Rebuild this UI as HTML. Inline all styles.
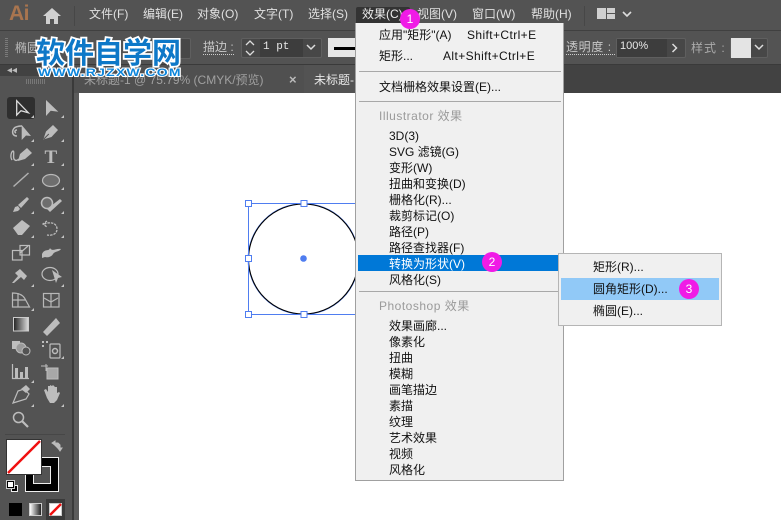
<!DOCTYPE html>
<html><head><meta charset="utf-8">
<style>
html,body{margin:0;padding:0;background:#fff}
#r{position:relative;width:781px;height:520px;overflow:hidden;background:#fff;font-family:"Liberation Sans","Noto Sans CJK SC",sans-serif;font-size:12px}
#r div{position:absolute;box-sizing:border-box}
.t{white-space:nowrap;line-height:16px;height:16px}
.m{color:#e0e0e0;top:6px}
.i{color:#111;left:33px}
.g{color:#9a9a9a}
.n{width:20px;height:20px;border-radius:50%;background:#f01be6;color:#fff;text-align:center;line-height:20px;font-size:12px}
.b{background:#474747;border:1px solid #5f5f5f;border-radius:2px}
.c{color:#c8c8c8}
</style></head><body>
<div id="r">
<div style="left:0;top:0;width:781px;height:31px;background:#535353"></div>
<div style="left:0;top:30px;width:781px;height:1px;background:#404040"></div>
<div style="left:0;top:31px;width:781px;height:34px;background:#535353"></div>
<div style="left:0;top:64px;width:781px;height:1px;background:#3a3a3a"></div>
<div style="left:73px;top:65px;width:708px;height:28px;background:#424242"></div>
<div style="left:0;top:65px;width:72px;height:455px;background:#535353"></div>
<div style="left:0;top:65px;width:72px;height:11px;background:#424242"></div>
<div style="left:72px;top:65px;width:2px;height:455px;background:#3a3a3a"></div>
<div style="left:74px;top:93px;width:5px;height:427px;background:#5c5c5c"></div>
<div style="left:74px;top:65px;width:230px;height:28px;background:#505050"></div>
<div style="left:304px;top:65px;width:52px;height:28px;background:#535353"></div>

<div class="t" style="left:9px;top:1px;font-size:21px;line-height:26px;height:26px;font-weight:bold;color:#a9754f;letter-spacing:-.5px">Ai</div>
<svg style="position:absolute;left:43px;top:8px" width="18" height="16" viewBox="0 0 18 16"><path d="M9 0L0 8h3v8h4v-5h4v5h4V8h3z" fill="#d0d0d0"/></svg>
<div style="left:74px;top:6px;width:1px;height:20px;background:#474747"></div>
<div class="t m" style="left:89px">文件(F)</div>
<div class="t m" style="left:143px">编辑(E)</div>
<div class="t m" style="left:197px">对象(O)</div>
<div class="t m" style="left:254px">文字(T)</div>
<div class="t m" style="left:308px">选择(S)</div>
<div style="left:356px;top:7px;width:54px;height:16px;background:#333;border-radius:2px 2px 0 0"></div>
<div class="t m" style="left:362px;color:#eee">效果(C)</div>
<div class="t m" style="left:417px">视图(V)</div>
<div class="t m" style="left:472px">窗口(W)</div>
<div class="t m" style="left:531px">帮助(H)</div>
<div style="left:584px;top:6px;width:1px;height:20px;background:#474747"></div>
<div style="left:597px;top:8px;width:9px;height:11px;background:#d0d0d0"></div>
<div style="left:607px;top:8px;width:8px;height:5px;background:#d0d0d0"></div>
<div style="left:607px;top:14px;width:8px;height:5px;background:#d0d0d0"></div>
<svg style="position:absolute;left:621px;top:10px" width="12" height="8"><path d="M2 2l4 4 4-4" fill="none" stroke="#ddd" stroke-width="1.6"/></svg>

<div style="left:5px;top:38px;width:3px;height:20px;background:repeating-linear-gradient(#7a7a7a 0 1px,#535353 1px 2px)"></div>
<div class="t c" style="left:15px;top:40px;color:#bbb">椭圆</div>
<div class="b" style="left:150px;top:38px;width:41px;height:21px"></div>
<div class="t c" style="left:203px;top:40px;border-bottom:1px dotted #ccc;height:15px;line-height:14px">描边 :</div>
<div class="b" style="left:241px;top:38px;width:81px;height:20px"></div>
<div style="left:260px;top:39px;width:43px;height:18px;background:#3d3d3d"></div>
<svg style="position:absolute;left:243px;top:38px" width="14" height="20"><path d="M3 7l4-4 4 4M3 13l4 4 4-4" fill="none" stroke="#ddd" stroke-width="1.3"/></svg>
<div class="t" style="left:263px;top:39px;color:#e8e8e8;font-size:11px;font-family:'Liberation Mono',monospace">1 pt</div>
<svg style="position:absolute;left:305px;top:43px" width="12" height="8"><path d="M2 2l4 4 4-4" fill="none" stroke="#ddd" stroke-width="1.5"/></svg>
<div style="left:328px;top:38px;width:28px;height:19px;background:#e6e6e6"></div>
<div style="left:334px;top:47px;width:22px;height:3px;background:#000"></div>

<div class="t c" style="left:566px;top:40px;border-bottom:1px dotted #ccc;height:15px;line-height:14px;width:55px;overflow:hidden;letter-spacing:.6px">透明度 :</div>
<div class="b" style="left:616px;top:38px;width:70px;height:20px"></div>
<div style="left:617px;top:39px;width:50px;height:18px;background:#3d3d3d"></div>
<div class="t" style="left:620px;top:38px;color:#e8e8e8;font-size:11px">100%</div>
<svg style="position:absolute;left:670px;top:42px" width="10" height="12"><path d="M2.500 2l4 4-4 4" fill="none" stroke="#ddd" stroke-width="1.500"/></svg>
<div class="t" style="left:691px;top:40px;color:#aaa;letter-spacing:1px">样式 :</div>
<div class="b" style="left:730px;top:38px;width:38px;height:20px"></div>
<div style="left:731px;top:38px;width:20px;height:20px;background:#e4e4e4"></div>
<svg style="position:absolute;left:753px;top:43px" width="12" height="8"><path d="M2 2l4 4 4-4" fill="none" stroke="#ddd" stroke-width="1.500"/></svg>

<div class="t" style="left:84px;top:72px;color:#a0a0a0;font-size:12px">未标题-1 @ 75.79% (CMYK/预览)</div>
<div class="t" style="left:289px;top:72px;color:#bbb;font-size:13px;font-weight:bold">×</div>
<div class="t" style="left:314px;top:72px;color:#e8e8e8">未标题-</div>
<div class="t" style="left:7px;top:63px;color:#bbb;font-size:10px">◂◂</div>
<div style="left:26px;top:79px;width:19px;height:5px;background:repeating-linear-gradient(90deg,#777 0 1px,#535353 1px 2px)"></div>

<svg style="position:absolute;left:0;top:90px" width="73" height="345" viewBox="0 90 73 345">
<rect x="7" y="97" width="28" height="22" rx="3" fill="#2f2f2f"/>
<path d="M16.700 100.700V115l4.300-4.300 7.300 2z" fill="none" stroke="#dcdcdc" stroke-width="1.300"/>
<path d="M46 100v16l4.700-5.300 7.600 1z" fill="#bdbdbd"/>
<path d="M17 136c-4 0-5-3-4-6 1-3 5-4 9-4M17 130c-2 0-3 2-1 3" fill="none" stroke="#bdbdbd" stroke-width="1.500"/>
<path d="M21.700 125l9.300 11-5-.5-4.300 4.500z" fill="#bdbdbd"/>
<path d="M43.300 139.500l2.700-8 7-6.500 5 5-6.500 7z" fill="#bdbdbd"/><path d="M43.800 139l5-5" stroke="#535353"/>
<path d="M12 160c-2-3-1-8 1-9 2 0-1 8 2 9 1 1 3 0 4-1" fill="none" stroke="#bdbdbd" stroke-width="1.300"/>
<path d="M18 161l2-7 7-6 5 5-7 6z" fill="#bdbdbd"/>
<text x="44.500" y="163" font-family="Liberation Serif,serif" font-size="19" font-weight="bold" fill="#bdbdbd">T</text>
<path d="M13.500 186.500l15-13.500" stroke="#b0b0b0" stroke-width="1.500"/>
<ellipse cx="51" cy="180.500" rx="8.500" ry="6" fill="#6e6e6e" stroke="#b8b8b8" stroke-width="1.200"/>
<path d="M13 212l2-5 3-1 2 3-2 2zM18 205l9-8 2 2-8 9z" fill="#bdbdbd"/>
<circle cx="47" cy="203" r="5.500" fill="#6e6e6e" stroke="#bdbdbd" stroke-width="1.500"/>
<path d="M47 209l13-10 2 2-12 11z" fill="#bdbdbd"/>
<path d="M13 228l9-8 8 6-8 9h-4z" fill="#bdbdbd"/>
<path d="M47 221l-4 3 4 3M44 224c8-3 13 0 13 5 0 5-5 7-10 6" fill="none" stroke="#bdbdbd" stroke-width="1.300" stroke-dasharray="2.500 1"/>
<g fill="none" stroke="#bdbdbd" stroke-width="1.200"><rect x="12.500" y="250.500" width="9.500" height="9.500"/><rect x="20" y="245.500" width="9.500" height="9.500"/><path d="M20 253l8-7"/></g>
<path d="M42 254c3-6 7-2 8-6 2 4 6 0 11 1-2 3-6 2-8 5-1 2-4 4-8 3l-3 1z" fill="#bdbdbd"/>
<path d="M12 283l6-7-3-3 5-4 7 7-3 4-3-3-7 6z" fill="#bdbdbd"/>
<ellipse cx="50" cy="274" rx="8" ry="6.500" fill="none" stroke="#bdbdbd" stroke-width="1.200"/>
<path d="M52 270l10 7-4 1-2 5z" fill="#bdbdbd"/>
<g fill="none" stroke="#b8b8b8" stroke-width="1.200"><path d="M12.500 307v-14c7 0 10 2 12 5l5 9zM18 293v14M12.500 300h13"/><rect x="43.500" y="293.500" width="15.500" height="13.500"/><path d="M51 293.500v13.500M44 298l7 4 7-4"/></g>
<defs><linearGradient id="gr"><stop offset="0" stop-color="#222"/><stop offset="1" stop-color="#ddd"/></linearGradient></defs>
<rect x="13.500" y="317.500" width="15" height="13.500" fill="url(#gr)" stroke="#ccc"/>
<path d="M43 332l13-14 4 5-13 13z" fill="#bdbdbd"/>
<rect x="12" y="341" width="8" height="8" fill="#bdbdbd"/>
<circle cx="21" cy="348" r="5" fill="#999" stroke="#bdbdbd"/><circle cx="26" cy="351" r="4" fill="#535353" stroke="#bdbdbd"/>
<rect x="50" y="344" width="10" height="14" rx="1" fill="none" stroke="#bdbdbd" stroke-width="1.200"/><circle cx="55" cy="351" r="2.500" fill="none" stroke="#bdbdbd" stroke-width="1.500"/>
<path d="M42 341h2v2h-2zM46 341h2v2h-2zM42 345h2v2h-2z" fill="#bdbdbd"/>
<path d="M12.500 364v14.500h16.500" fill="none" stroke="#bdbdbd" stroke-width="1.200"/>
<path d="M15 368h3v10h-3zM20 372h3v6h-3zM25 367h3v11h-3z" fill="#bdbdbd"/>
<path d="M47 368h11v11H47z" fill="#a8a8a8" stroke="#bdbdbd"/><path d="M41 366h7M46 364v7" stroke="#bdbdbd" fill="none"/>
<path d="M13 403l5-12 6-2 5 5-3 5z" fill="none" stroke="#bdbdbd" stroke-width="1.200"/><path d="M21 389l5-4 4 4-4 4z" fill="#bdbdbd"/>
<path d="M47 398l-3-8 2-1 2 3v-6h2v-1l2 1 1-1 2 2 2 0v6l2-1 1 1-3 7-3 3h-4z" fill="#bdbdbd"/>
<circle cx="18.500" cy="417.500" r="5" fill="none" stroke="#bdbdbd" stroke-width="1.500"/><path d="M22 421l6 6" stroke="#bdbdbd" stroke-width="2.200"/>
<g fill="#c4c4c4"><path d="M34 115v3h-3zM64 115v3h-3zM34 139v3h-3zM64 139v3h-3zM34 163v3h-3zM64 163v3h-3zM34 187v3h-3zM64 187v3h-3zM34 211v3h-3zM64 211v3h-3zM34 235v3h-3zM64 235v3h-3zM34 284v3h-3zM64 284v3h-3zM34 308v3h-3zM64 356v3h-3zM34 380v3h-3zM34 404v3h-3zM64 404v3h-3z"/></g>
</svg>

<div style="left:5px;top:434px;width:60px;height:1px;background:#474747"></div>
<div style="left:25px;top:457px;width:34px;height:35px;background:#000;border:1px solid #eee"></div>
<div style="left:33px;top:466px;width:18px;height:18px;background:#535353;border:1px solid #eee"></div>
<svg style="position:absolute;left:6px;top:439px" width="36" height="36"><rect x=".5" y=".5" width="35" height="35" fill="#fff" stroke="#333"/><path d="M2 34L34 2" stroke="#f01010" stroke-width="2.500"/></svg>
<svg style="position:absolute;left:50px;top:439px" width="14" height="14"><path d="M2 4h6l2 2v6M2 4l3-2v4zM10 12l-2-3h4z" fill="#bbb" stroke="#bbb" stroke-width="1"/></svg>
<div style="left:11px;top:485px;width:7px;height:7px;background:#000;border:1px solid #eee"></div>
<div style="left:7px;top:481px;width:7px;height:7px;background:#fff;border:1px solid #000;outline:1px solid #ccc"></div>
<div style="left:9px;top:503px;width:13px;height:13px;background:#000"></div>
<div style="left:29px;top:503px;width:13px;height:13px;background:linear-gradient(90deg,#fff,#222);border:1px solid #ccc"></div>
<div style="left:46px;top:499px;width:19px;height:21px;background:#3a3a3a"></div>
<svg style="position:absolute;left:49px;top:503px" width="13" height="13"><rect x=".5" y=".5" width="12" height="12" fill="#fff" stroke="#ccc"/><path d="M1 12L12 1" stroke="#f01010" stroke-width="2.500"/></svg>

<div style="left:79px;top:93px;width:702px;height:427px;background:#fff"></div>
<svg style="position:absolute;left:240px;top:195px" width="120" height="125">
<circle cx="63.500" cy="64" r="55.500" fill="none" stroke="#4f7df0" stroke-width=".8"/>
<circle cx="63.500" cy="64" r="55" fill="#fff" stroke="#000" stroke-width="1.100"/>
<path d="M8.500 8.500H120M8.500 8.500v111M8.500 119.500H120" stroke="#4f7df0" fill="none"/>
<circle cx="63.500" cy="63.500" r="3.300" fill="#4f7df0"/>
<g fill="#fff" stroke="#4f7df0"><rect x="5.500" y="5.500" width="6" height="6"/><rect x="61" y="5.500" width="6" height="6"/><rect x="5.500" y="60.500" width="6" height="6"/><rect x="5.500" y="116.500" width="6" height="6"/><rect x="61" y="116.500" width="6" height="6"/></g>
</svg>

<div style="left:355px;top:23px;width:209px;height:458px;background:#f0f0f0;border:1px solid #a0a0a0;border-top:0">
<div style="left:2px;top:232px;width:200px;height:16px;background:#0078d7"></div>
<div style="left:3px;top:48px;width:202px;height:1px;background:#a8a8a8"></div>
<div style="left:3px;top:78px;width:202px;height:1px;background:#a8a8a8"></div>
<div style="left:3px;top:268px;width:202px;height:1px;background:#a8a8a8"></div>
<div class="t" style="left:23px;top:4px;color:#111">应用"矩形"(A)</div>
<div class="t" style="left:111px;top:4px;color:#111;letter-spacing:.4px">Shift+Ctrl+E</div>
<div class="t" style="left:23px;top:25px;color:#111">矩形...</div>
<div class="t" style="left:87px;top:25px;color:#111;letter-spacing:.4px">Alt+Shift+Ctrl+E</div>
<div class="t" style="left:23px;top:56px;color:#111">文档栅格效果设置(E)...</div>
<div class="t g" style="left:23px;top:85px;letter-spacing:.5px">Illustrator 效果</div>
<div class="t i" style="top:105px">3D(3)</div>
<div class="t i" style="top:121px">SVG 滤镜(G)</div>
<div class="t i" style="top:137px">变形(W)</div>
<div class="t i" style="top:153px">扭曲和变换(D)</div>
<div class="t i" style="top:169px">栅格化(R)...</div>
<div class="t i" style="top:185px">裁剪标记(O)</div>
<div class="t i" style="top:201px">路径(P)</div>
<div class="t i" style="top:217px">路径查找器(F)</div>
<div class="t i" style="top:233px;color:#fff">转换为形状(V)</div>
<div class="t i" style="top:249px">风格化(S)</div>
<div class="t g" style="left:23px;top:275px;letter-spacing:.5px">Photoshop 效果</div>
<div class="t i" style="top:295px">效果画廊...</div>
<div class="t i" style="top:311px">像素化</div>
<div class="t i" style="top:327px">扭曲</div>
<div class="t i" style="top:343px">模糊</div>
<div class="t i" style="top:359px">画笔描边</div>
<div class="t i" style="top:375px">素描</div>
<div class="t i" style="top:391px">纹理</div>
<div class="t i" style="top:407px">艺术效果</div>
<div class="t i" style="top:423px">视频</div>
<div class="t i" style="top:439px">风格化</div>
</div>

<div style="left:558px;top:253px;width:164px;height:73px;background:#f0f0f0;border:1px solid #b5b5b5"></div>
<div style="left:561px;top:278px;width:158px;height:22px;background:#91c9f7"></div>
<div class="t" style="left:593px;top:259px;color:#111">矩形(R)...</div>
<div class="t" style="left:593px;top:281px;color:#111">圆角矩形(D)...</div>
<div class="t" style="left:593px;top:303px;color:#111">椭圆(E)...</div>

<div class="n" style="left:400px;top:9px">1</div>
<div class="n" style="left:482px;top:252px">2</div>
<div class="n" style="left:679px;top:279px">3</div>

<div class="t" style="left:36px;top:34px;height:34px;line-height:34px;font-size:29px;font-weight:700;color:#0d78c8;font-family:'Noto Sans CJK SC',sans-serif;-webkit-text-stroke:3.500px #fff;paint-order:stroke fill">软件自学网</div>
<div class="t" style="left:38px;top:65.500px;height:14px;line-height:14px;font-size:11px;font-weight:bold;color:#0d86dc;letter-spacing:1px;transform:scaleX(1.27);transform-origin:0 50%;-webkit-text-stroke:2px #fff;paint-order:stroke fill">WWW.RJZXW.COM</div>
</div>
</body></html>
